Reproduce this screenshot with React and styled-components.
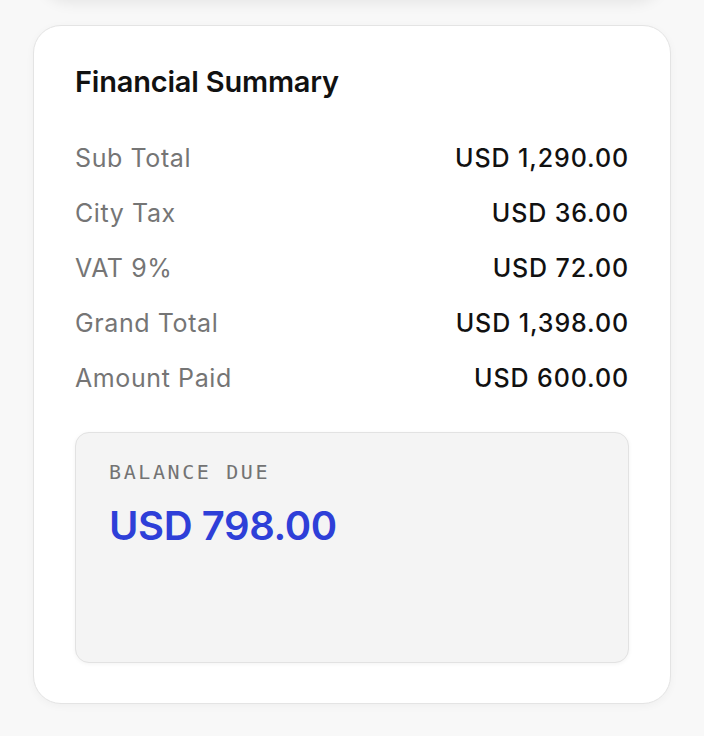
import React from 'react'
import styled, { createGlobalStyle } from 'styled-components';

const GlobalStyle = createGlobalStyle`
  body {
    margin: 0;
    background: #f8f8f8;
    font-family: Inter, "Noto Sans", sans-serif;
  }
`

const Page = styled.div`
  display: flex;
  flex-direction: column;
  gap: 26px;
  padding: 0 33px 32px 33px;
  overflow: hidden;
`

const PrevCard = styled.div`
  height: 60px;
  margin-top: -61px;
  margin-left: 8px;
  margin-right: 8px;
  background: #ffffff;
  border-radius: 0 0 28px 28px;
  box-shadow: 0 4px 14px rgba(0, 0, 0, 0.08);
`

const Card = styled.section`
  background: #ffffff;
  border: 1px solid #e4e4e4;
  border-radius: 28px;
  padding: 38px 41px 40px 41px;
  box-shadow: 0 2px 8px rgba(0, 0, 0, 0.04);
`

const Title = styled.h2`
  margin: 0 0 42px 0;
  font-size: 29px;
  line-height: 36px;
  font-weight: 600;
  color: #111111;
  letter-spacing: -0.2px;
`

const Rows = styled.div`
  display: flex;
  flex-direction: column;
  gap: 23px;
`

const Row = styled.div`
  display: flex;
  justify-content: space-between;
  align-items: center;
  font-size: 25px;
  line-height: 32px;
  letter-spacing: 0.6px;
`

const Label = styled.span`
  color: #757575;
  font-weight: 400;
`

const Value = styled.span`
  color: #111111;
  font-weight: 500;
  letter-spacing: 0.9px;
`

const BalanceBox = styled.div`
  margin-top: 38px;
  min-height: 231px;
  box-sizing: border-box;
  background: #f4f4f4;
  border: 1px solid #e2e2e2;
  border-radius: 14px;
  padding: 27px 33px;
  box-shadow: 0 1px 4px rgba(0, 0, 0, 0.05);
  display: flex;
  flex-direction: column;
  gap: 18px;
`

const BalanceLabel = styled.div`
  font-family: "DejaVu Sans Mono", "Liberation Mono", monospace;
  font-size: 20px;
  line-height: 24px;
  letter-spacing: 2.6px;
  color: #737373;
`

const BalanceAmount = styled.div`
  font-size: 40px;
  line-height: 48px;
  font-weight: 600;
  color: #2e3fd8;
  letter-spacing: -0.4px;
`

const lines = [
  { label: 'Sub Total', value: 'USD 1,290.00' },
  { label: 'City Tax', value: 'USD 36.00' },
  { label: 'VAT 9%', value: 'USD 72.00' },
  { label: 'Grand Total', value: 'USD 1,398.00' },
  { label: 'Amount Paid', value: 'USD 600.00' },
]

export default function App() {
  return (
    <>
      <GlobalStyle />
      <Page>
        <PrevCard />
        <Card>
          <Title>Financial Summary</Title>
          <Rows>
            {lines.map(line => (
              <Row key={line.label}>
                <Label>{line.label}</Label>
                <Value>{line.value}</Value>
              </Row>
            ))}
          </Rows>
          <BalanceBox>
            <BalanceLabel>BALANCE DUE</BalanceLabel>
            <BalanceAmount>USD 798.00</BalanceAmount>
          </BalanceBox>
        </Card>
      </Page>
    </>
  );
}
